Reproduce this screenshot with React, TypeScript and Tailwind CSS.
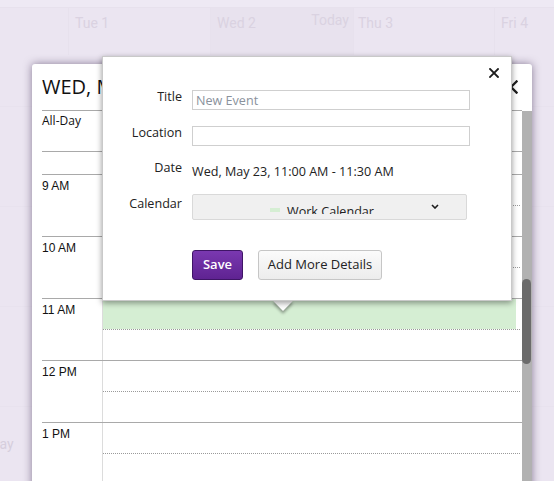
import React from 'react';

const font = { fontFamily: '"Open Sans", "Noto Sans", sans-serif' };

function CloseIcon({ size, stroke }: { size: number; stroke: number }) {
  return (
    <svg width={size} height={size} viewBox="0 0 10 10">
      <path d="M1 1L9 9M9 1L1 9" stroke="#1c1c1c" strokeWidth={stroke} strokeLinecap="square" fill="none" />
    </svg>
  );
}

function HourRow({ label, event }: { label: string; event?: boolean }) {
  return (
    <div className="flex h-[62px] border-b border-[#a9a9a9]">
      <div className="w-[61px] shrink-0 border-r border-[#dcdcdc] pt-[3px] text-[12px] leading-[16px] text-[#111] font-['Liberation_Sans',Arial,sans-serif]">
        {label}
      </div>
      <div className="flex-1">
        <div className="h-[31px] border-b border-dotted border-[#9a9a9a] mr-[2px]">
          {event && <div className="h-full mr-[4px] bg-[#d5eed3]" />}
        </div>
      </div>
    </div>
  );
}

export default function App() {
  return (
    <div className="relative w-[554px] h-[481px] overflow-hidden bg-[#ebe5f1]" style={font}>
      {/* month grid behind the overlay */}
      <div className="h-[8px] bg-[#eee9f4] border-b border-[#e7e1ed]" />
      <div className="flex h-[47px] text-[14px] text-[#dad2e1] font-['Roboto',sans-serif]">
        <div className="w-[68px]" />
        <div className="w-[142px] border-l border-[#e7e1ed] pl-[6px] pt-[5px]">Tue 1</div>
        <div className="w-[143px] border-l border-[#e7e1ed] bg-[#e8e2ee] pl-[6px] pr-[4px] pt-[5px] flex justify-between">
          <span>Wed 2</span>
          <span className="mt-[-3px]">Today</span>
        </div>
        <div className="w-[141px] border-l border-[#e7e1ed] pl-[4px] pt-[5px]">Thu 3</div>
        <div className="flex-1 border-l border-[#e7e1ed] pl-[6px] pt-[5px]">Fri 4</div>
      </div>
      <div className="h-[52px] border-b border-[#e8e2ee]" />
      <div className="h-[100px] border-b border-[#e8e2ee]" />
      <div className="h-[100px] border-b border-[#e8e2ee]" />
      <div className="h-[100px] border-b border-[#e8e2ee] flex items-end">
        <span className="ml-[-24px] mb-[-49px] text-[14px] text-[#d6cedd] font-['Roboto',sans-serif]">Today</span>
      </div>

      {/* day view dialog */}
      <div className="absolute left-[32px] top-[64px] w-[500px] h-[430px] bg-white rounded-t-[3px] shadow-[0_0_8px_rgba(40,20,60,0.5)] flex flex-col">
        <div className="ml-[10px] w-[480px] h-[47px] border-b border-[#a9a9a9] flex items-center justify-between pr-[4px] shrink-0">
          <span className="text-[20px] leading-[28px] text-[#111]">WED, MAY 23</span>
          <CloseIcon size={14} stroke={1.6} />
        </div>
        <div className="flex flex-1">
          <div className="ml-[10px] w-[480px] flex flex-col">
            <div className="h-[41px] border-b border-[#a9a9a9] pt-[2px] text-[12px] leading-[16px] text-[#111]">All-Day</div>
            <div className="flex h-[23px] border-b border-[#a9a9a9]">
              <div className="w-[61px] border-r border-[#dcdcdc]" />
            </div>
            <HourRow label="9 AM" />
            <HourRow label="10 AM" />
            <HourRow label="11 AM" event />
            <HourRow label="12 PM" />
            <HourRow label="1 PM" />
          </div>
          <div className="w-[10px] bg-[#b1b1b1] flex flex-col">
            <div className="h-[168px]" />
            <div className="h-[85px] w-[9px] rounded-full bg-[#6b6b6b]" />
          </div>
        </div>
      </div>

      {/* quick add popover */}
      <div className="absolute left-[102px] top-[56px] w-[410px] h-[245px]">
        <div className="absolute left-[174px] top-[238px] w-[14px] h-[14px] rotate-45 bg-white shadow-[2px_2px_3px_rgba(0,0,0,0.35)]" />
        <div className="relative h-full bg-white border border-[#c9c9c9] shadow-[0_2px_6px_rgba(0,0,0,0.4)] pt-[33px] text-[12.6px] text-[#222]">
          <div className="absolute right-[12px] top-[11px]">
            <CloseIcon size={10} stroke={1.8} />
          </div>
          <div className="flex items-start">
            <div className="w-[79px] mr-[10px] text-right leading-[18px] mt-[-2px]">Title</div>
            <div className="w-[278px] h-[20px] border border-[#cfcfcf] pl-[3px] leading-[19px] text-[#8a929c]">New Event</div>
          </div>
          <div className="flex items-start mt-[16px]">
            <div className="w-[79px] mr-[10px] text-right leading-[18px] mt-[-2px]">Location</div>
            <div className="w-[278px] h-[20px] border border-[#cfcfcf]" />
          </div>
          <div className="flex items-start mt-[13px]">
            <div className="w-[79px] mr-[10px] text-right leading-[18px]">Date</div>
            <div className="mt-[4px] leading-[18px]">Wed, May 23, 11:00 AM - 11:30 AM</div>
          </div>
          <div className="flex items-start mt-[13px]">
            <div className="w-[79px] mr-[10px] text-right leading-[18px] mt-[1px]">Calendar</div>
            <div className="relative w-[275px] h-[26px] bg-[#f0f0f0] border border-[#d9d9d9] rounded-[2px]">
              <div className="h-[19px] overflow-hidden flex items-start pl-[77px] pt-[10px]">
                <span className="w-[10px] h-[4px] mt-[3px] bg-[#d5eed3] mr-[7px]" />
                <span className="leading-[18px] mt-[-2px]">Work Calendar</span>
              </div>
              <svg className="absolute right-[27px] top-[9px]" width="8" height="5" viewBox="0 0 8 5">
                <path d="M1 1L4 4L7 1" stroke="#1c1c1c" strokeWidth="1.6" fill="none" />
              </svg>
            </div>
          </div>
          <div className="flex gap-[15px] ml-[89px] mt-[30px]">
            <button className="w-[51px] h-[30px] rounded-[3px] border border-[#3f1566] bg-gradient-to-b from-[#7a38b0] to-[#5f2392] text-white font-semibold text-[13px]">
              Save
            </button>
            <button className="w-[124px] h-[30px] rounded-[3px] border border-[#c6c6c6] bg-gradient-to-b from-[#fbfbfb] to-[#ececec] text-[#222] text-[13px]">
              Add More Details
            </button>
          </div>
        </div>
      </div>
    </div>
  );
}
